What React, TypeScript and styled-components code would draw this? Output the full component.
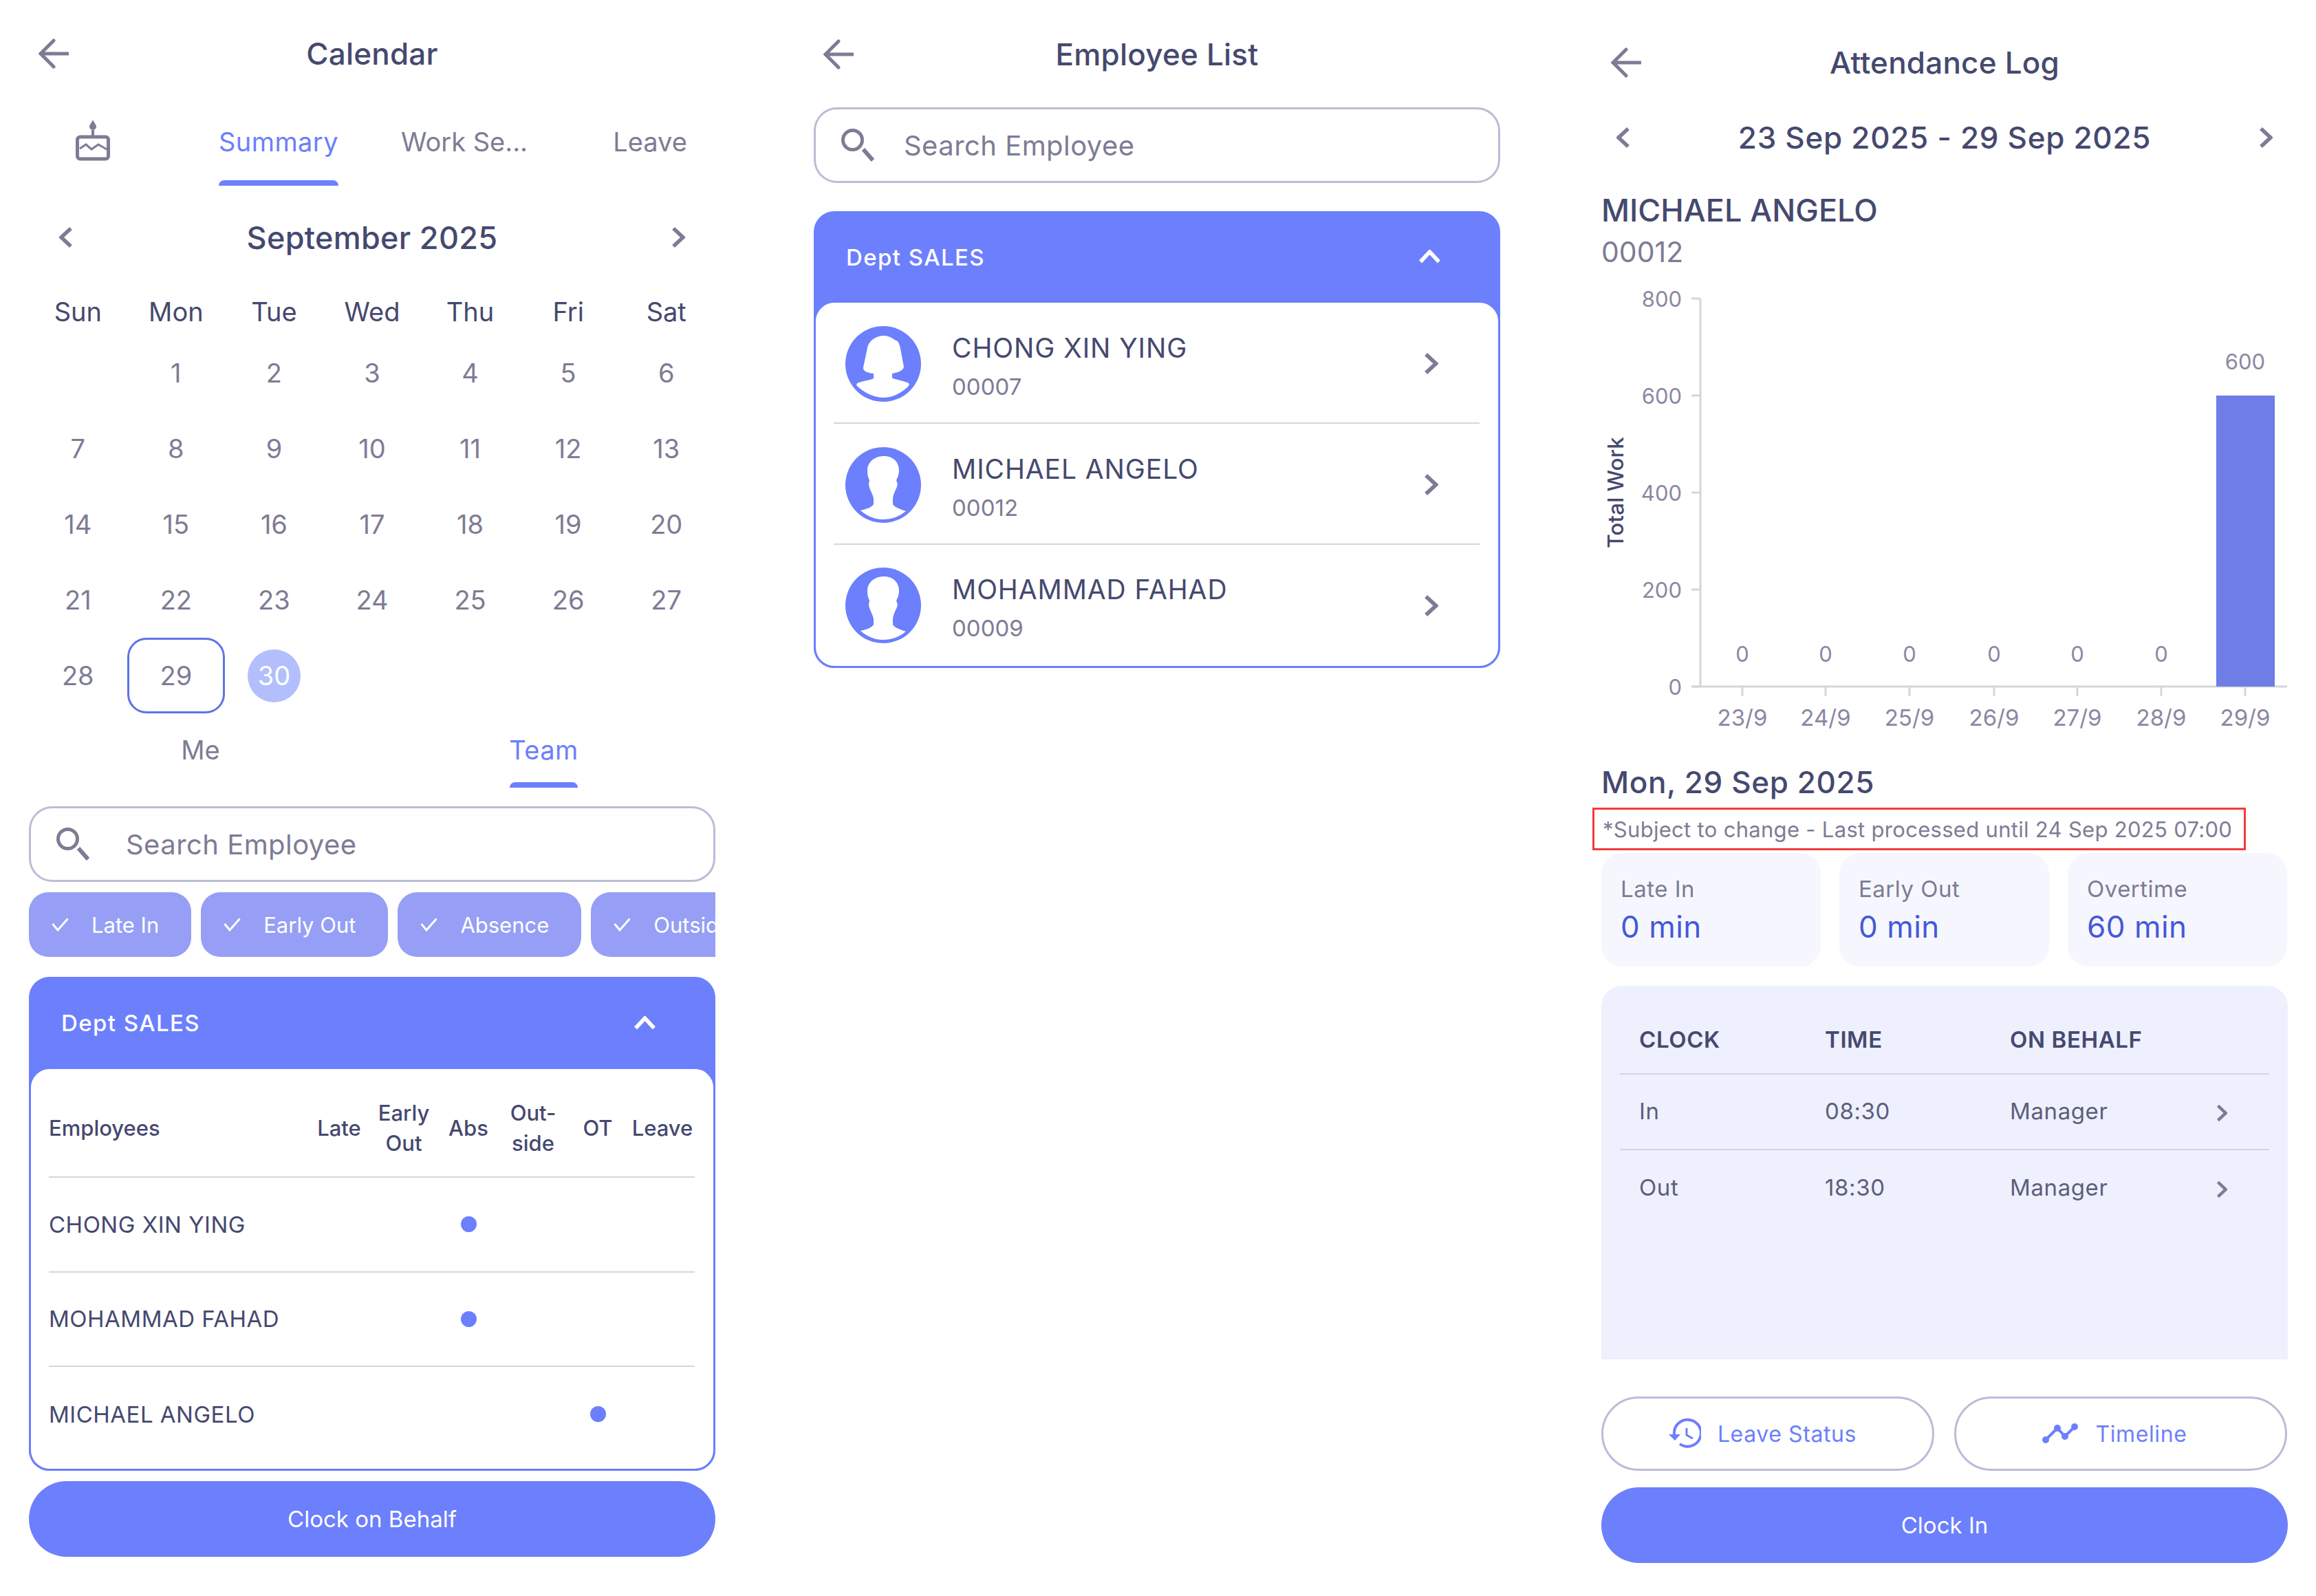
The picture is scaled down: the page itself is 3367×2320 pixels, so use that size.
import React from 'react';
import styled, { createGlobalStyle } from 'styled-components';

const ACCENT = '#6c7ffc';
const INK = '#45496f';
const MUTED = '#7d7c95';
const RULE = '#d6d6da';
const OUTLINE = '#b9bdd6';

const GlobalStyle = createGlobalStyle`
  html, body {
    margin: 0;
    padding: 0;
    background: #fff;
  }
  body {
    font-family: Inter, "Noto Sans", sans-serif;
    color: ${INK};
  }
  * {
    box-sizing: border-box;
  }
`;

const Page = styled.div`
  width: 3367px;
  height: 2320px;
  display: grid;
  grid-template-columns: 1141px 1145px 1081px;
  overflow: hidden;
`;

const Screen = styled.section<{ $top: number }>`
  padding: ${(p) => p.$top}px 0 0 42px;
  width: 1040px;
`;

const Header = styled.header`
  display: grid;
  grid-template-columns: 100px 1fr 100px;
  align-items: center;
  height: 44px;

  > svg {
    margin-left: 14px;
  }
`;

const Title = styled.h1`
  margin: 0;
  text-align: center;
  font-size: 44px;
  line-height: 44px;
  font-weight: 500;
  letter-spacing: 0.2px;
`;

const TabRow = styled.div`
  display: grid;
  grid-template-columns: 228px 270px 270px 270px;
  align-items: start;
  height: 98px;
  margin-top: 72px;
`;

const CakeWrap = styled.div`
  padding-left: 68px;
`;

const Tab = styled.div<{ $active?: boolean; $gap: number }>`
  display: flex;
  flex-direction: column;
  align-items: center;
  font-size: 38px;
  line-height: 68px;
  letter-spacing: ${(p) => (p.$active ? 0.4 : 0)}px;
  color: ${(p) => (p.$active ? ACCENT : MUTED)};

  &::after {
    content: '';
    display: ${(p) => (p.$active ? 'block' : 'none')};
    align-self: center;
    width: var(--bar-width);
    height: 8px;
    margin-top: ${(p) => p.$gap}px;
    border-radius: 8px 8px 0 0;
    background: ${ACCENT};
  }
`;

const MonthBar = styled.div`
  display: flex;
  align-items: center;
  justify-content: space-between;
  height: 50px;
  margin-top: 50px;
  padding: 0 44px;
`;

const MonthLabel = styled.div`
  font-size: 45px;
  font-weight: 500;
  letter-spacing: 0.3px;
`;

const WeekRow = styled.div`
  display: grid;
  grid-template-columns: repeat(7, 1fr);
  height: 68px;
  margin-top: 49px;
  align-items: center;
  text-align: center;
  font-size: 38px;
`;

const DayGrid = styled.div`
  display: grid;
  grid-template-columns: repeat(7, 1fr);
  grid-auto-rows: 110px;
`;

const Day = styled.div<{ $kind?: 'today' | 'selected' }>`
  display: flex;
  align-items: center;
  justify-content: center;
  font-size: 38px;
  color: ${MUTED};
  ${(p) =>
    p.$kind === 'today' &&
    `border: 3px solid #5f73e8; border-radius: 28px;`}
`;

const SelectedDot = styled.div`
  display: flex;
  align-items: center;
  justify-content: center;
  width: 77px;
  height: 77px;
  border-radius: 50%;
  background: #b3bffd;
  color: #fff;
`;

const ScopeTabs = styled.div`
  display: grid;
  grid-template-columns: 1fr 1fr;
  padding-top: 19px;
  height: 108px;
`;

const SearchBox = styled.div<{ $top: number; $left: number }>`
  display: flex;
  align-items: center;
  height: 110px;
  margin-top: ${(p) => p.$top}px;
  padding-left: 35px;
  border: 3px solid ${OUTLINE};
  border-radius: 34px;
  font-size: 40px;
  color: ${MUTED};

  > span {
    margin-left: ${(p) => p.$left}px;
    letter-spacing: 0.45px;
  }
`;

const ChipRow = styled.div`
  display: flex;
  gap: 14px;
  height: 94px;
  margin-top: 15px;
  overflow: hidden;
`;

const Chip = styled.div`
  flex: none;
  display: flex;
  align-items: center;
  gap: 33px;
  padding: 0 47px 0 33px;
  border-radius: 28px;
  background: #969ff5;
  color: #fff;
  font-size: 31px;
`;

const DeptCard = styled.div<{ $top: number }>`
  margin-top: ${(p) => p.$top}px;
  border-radius: 30px;
  background: ${ACCENT};
`;

const DeptHead = styled.div<{ $height: number }>`
  display: flex;
  align-items: center;
  justify-content: space-between;
  height: ${(p) => p.$height}px;
  padding: 3px 86px 0 47px;
  color: #fff;
  font-size: 33px;
  font-weight: 500;
  letter-spacing: 1.4px;
`;

const DeptBody = styled.div<{ $height: number }>`
  height: ${(p) => p.$height}px;
  border: 3px solid ${ACCENT};
  border-radius: 30px;
  background: #fff;
`;

const MatrixRow = styled.div<{ $head?: boolean; $last?: boolean }>`
  display: grid;
  grid-template-columns: 375px repeat(6, 94px);
  align-items: center;
  margin: 0 0 0 26px;
  width: 939px;
  height: ${(p) => (p.$head ? 158 : 137.5)}px;
  padding-top: ${(p) => (p.$head ? 16 : 0)}px;
  border-bottom: ${(p) => (p.$last ? 'none' : `2px solid ${RULE}`)};
  font-size: ${(p) => (p.$head ? 31 : 33)}px;
  font-weight: ${(p) => (p.$head ? 500 : 400)};
  letter-spacing: ${(p) => (p.$head ? 0 : 0.5)}px;
  line-height: 44px;
`;

const MatrixCell = styled.div`
  display: flex;
  justify-content: center;
  text-align: center;
`;

const Dot = styled.div`
  width: 23px;
  height: 23px;
  border-radius: 50%;
  background: ${ACCENT};
`;

const PrimaryButton = styled.div<{ $top: number }>`
  display: flex;
  align-items: center;
  justify-content: center;
  height: 110px;
  margin-top: ${(p) => p.$top}px;
  border-radius: 55px;
  background: ${ACCENT};
  color: #fff;
  font-size: 33px;
`;

const EmployeeRow = styled.div<{ $last?: boolean }>`
  display: flex;
  align-items: center;
  height: ${(p) => (p.$last ? 173 : 176)}px;
  margin: 0 27px 0 26px;
  padding: 3px 60px 0 17px;
  border-bottom: ${(p) => (p.$last ? 'none' : `2px solid ${RULE}`)};
`;

const EmployeeText = styled.div`
  margin-left: 45px;
  padding-top: 10px;
  flex: 1;
`;

const EmployeeName = styled.div`
  font-size: 39px;
  line-height: 50px;
  letter-spacing: 0.9px;
`;

const EmployeeCode = styled.div`
  margin-top: 6px;
  font-size: 33px;
  line-height: 50px;
  color: ${MUTED};
`;

const RangeBar = styled.div`
  display: flex;
  align-items: center;
  justify-content: space-between;
  height: 50px;
  margin-top: 62px;
  padding: 0 22px;
  font-size: 44px;
  font-weight: 500;
  letter-spacing: 0.7px;
`;

const PersonName = styled.div`
  margin-top: 54px;
  font-size: 45px;
  font-weight: 500;
  line-height: 54px;
`;

const PersonCode = styled.div`
  margin-top: 8px;
  font-size: 41px;
  line-height: 50px;
  color: ${MUTED};
`;

const ChartSvg = styled.svg`
  display: block;
  margin-top: 29px;
`;

const AxisText = styled.text<{ $size: number }>`
  font-family: Inter, sans-serif;
  font-size: ${(p) => p.$size}px;
  fill: #8a88a3;
`;

const AxisTitle = styled.text`
  font-family: Inter, sans-serif;
  font-size: 31.5px;
  font-weight: 500;
  fill: ${INK};
`;

const DateTitle = styled.div`
  margin-top: 42px;
  font-size: 44px;
  font-weight: 500;
  line-height: 50px;
  letter-spacing: 0.6px;
`;

const Note = styled.div`
  display: flex;
  align-items: center;
  width: 950px;
  height: 62px;
  margin: 12px 0 0 -13px;
  padding-left: 12px;
  border: 3px solid #f33b3b;
  font-size: 31px;
  letter-spacing: 0.3px;
  white-space: nowrap;
  color: ${MUTED};
`;

const StatRow = styled.div`
  display: grid;
  grid-template-columns: 319px 305px 319px;
  column-gap: 27px;
  margin-top: 4px;
`;

const StatCard = styled.div`
  height: 165px;
  padding: 30px 0 0 28px;
  border-radius: 30px;
  background: #f6f7fe;
`;

const StatLabel = styled.div`
  font-size: 33px;
  line-height: 44px;
  letter-spacing: 0.5px;
  color: ${MUTED};
`;

const StatValue = styled.div`
  margin-top: 5px;
  font-size: 44px;
  line-height: 56px;
  letter-spacing: 0.5px;
  color: #4459d8;
`;

const LogPanel = styled.div`
  height: 543px;
  margin-top: 28px;
  padding: 0 27px;
  border-radius: 30px 30px 0 0;
  background: #eef0fd;
`;

const LogRow = styled.div<{ $head?: boolean }>`
  display: grid;
  grid-template-columns: 270px 269px 300px 1fr;
  align-items: center;
  height: ${(p) => (p.$head ? 129 : 110)}px;
  padding: ${(p) => (p.$head ? '29px 0 0 28px' : '0 0 3px 28px')};
  border-bottom: 2px solid #d3d5e6;
  font-size: 33px;
  font-weight: ${(p) => (p.$head ? 600 : 400)};
  letter-spacing: 0.6px;
  color: ${(p) => (p.$head ? INK : '#5c5e7c')};

  &:last-child {
    border-bottom: none;
  }
`;

const LogChevron = styled.div`
  display: flex;
  padding-top: 6px;
`;

const ActionRow = styled.div`
  display: grid;
  grid-template-columns: 484px 484px;
  column-gap: 29px;
  margin-top: 54px;
`;

const OutlineButton = styled.div`
  display: flex;
  align-items: center;
  justify-content: center;
  gap: 24px;
  height: 108px;
  padding-right: 18px;
  border: 3px solid ${OUTLINE};
  border-radius: 54px;
  color: ${ACCENT};
  font-size: 32px;
  letter-spacing: 0.6px;
`;

type Dir = 'left' | 'right' | 'up';

const CHEVRON: Record<Dir, string> = {
  left: 'M17 3 L3 16 L17 29',
  right: 'M3 3 L17 16 L3 29',
  up: 'M3 17 L16 3 L29 17',
};

function Chevron({ dir, size, color = MUTED }: { dir: Dir; size: number; color?: string }) {
  const box = dir === 'up' ? '0 0 32 20' : '0 0 20 32';
  const w = dir === 'up' ? size : (size * 20) / 32;
  const h = dir === 'up' ? (size * 20) / 32 : size;
  return (
    <svg width={w} height={h} viewBox={box} fill="none" stroke={color} strokeWidth={5.5}>
      <path d={CHEVRON[dir]} />
    </svg>
  );
}

function BackArrow() {
  return (
    <svg width="44" height="44" viewBox="0 0 44 44" fill="none" stroke={MUTED} strokeWidth={5} strokeLinecap="round">
      <path d="M3 22 H43 M22 3 L3 22 L22 41" />
    </svg>
  );
}

function CakeIcon() {
  return (
    <svg width="50" height="62" viewBox="20 10 50 62" fill="none" stroke={MUTED}>
      <path d="M45 12 C47 17 50 19 50 22 A5 5 0 0 1 40 22 C40 19 43 17 45 12 Z" fill={MUTED} stroke="none" />
      <path d="M45 27 V36" strokeWidth={4} />
      <rect x="22.5" y="37" width="45" height="32" rx="4" strokeWidth={5} />
      <path d="M26 54 L35 48 L43 55 L53 48 L65 55" strokeWidth={3} />
    </svg>
  );
}

function SearchIcon() {
  return (
    <svg width="52" height="52" viewBox="20 10 52 52" fill="none" stroke={MUTED} strokeWidth={5}>
      <circle cx="38.5" cy="28.5" r="14" />
      <path d="M54 42 L68 58" strokeWidth={6} />
    </svg>
  );
}

function CheckIcon() {
  return (
    <svg width="25" height="20" viewBox="0 0 25 20" fill="none" stroke="#fff" strokeWidth={3}>
      <path d="M1.5 9 L9 18 L23.5 1.5" />
    </svg>
  );
}

function FemaleAvatar() {
  return (
    <svg width="110" height="110" viewBox="0 0 110 110">
      <circle cx="55" cy="55" r="55" fill={ACCENT} />
      <path
        fill="#fff"
        d="M56 14 C66 14 70 20 76 22 C79 26 80 32 81 38 L85 59 C85 65 74 68 68 69 L68 75 C68 77 84 79 92 83 C94 85 92 87 90 89 C80 98 68 104 55 104 C42 104 28 97 18 88 C15 85 16 83 20 82 C28 79 42 78 41 75 L41 69 C34 68 25 66 26 60 L32 32 C33 24 42 14 56 14 Z"
      />
    </svg>
  );
}

function MaleAvatar() {
  return (
    <svg width="110" height="110" viewBox="0 0 110 110">
      <circle cx="55" cy="55" r="55" fill={ACCENT} />
      <path
        fill="#fff"
        d="M56 13 C70 13 78 22 78 34 C78 40 76 44 74 48 L76 54 C74 62 69 68 69 76 L69 83 C72 88 80 90 88 93 C78 101 68 105 55 105 C42 105 31 100 22 92 C30 90 38 88 41 83 L41 75 C40 68 35 62 34 54 L35 48 C33 44 32 40 32 34 C32 22 42 13 56 13 Z"
      />
    </svg>
  );
}

function HistoryIcon() {
  return (
    <svg width="50" height="50" viewBox="10 8 50 50" fill="none" stroke={ACCENT} strokeWidth={4}>
      <path d="M21 34 A19.5 19.5 0 1 1 29 48" />
      <path d="M13 34 H30 L22 43 Z" fill={ACCENT} stroke="none" />
      <path d="M39 25 V35 L48 40" strokeWidth={3} />
    </svg>
  );
}

function TrendIcon() {
  return (
    <svg width="54" height="30" viewBox="9 19 54 30" fill={ACCENT} stroke={ACCENT} strokeWidth={4}>
      <path d="M14 43 L31 26 L42 38 L56 24" fill="none" />
      <circle cx="14" cy="43" r="3" />
      <circle cx="31" cy="26" r="3" />
      <circle cx="42" cy="38" r="3" />
      <circle cx="56" cy="24" r="3" />
    </svg>
  );
}

const WEEKDAYS = ['Sun', 'Mon', 'Tue', 'Wed', 'Thu', 'Fri', 'Sat'];
const FILTERS = ['Late In', 'Early Out', 'Absence', 'Outside'];
const TEAM: { name: string; mark: number }[] = [
  { name: 'CHONG XIN YING', mark: 2 },
  { name: 'MOHAMMAD FAHAD', mark: 2 },
  { name: 'MICHAEL ANGELO', mark: 4 },
];
const STAFF = [
  { name: 'CHONG XIN YING', code: '00007', female: true },
  { name: 'MICHAEL ANGELO', code: '00012', female: false },
  { name: 'MOHAMMAD FAHAD', code: '00009', female: false },
];
const BARS = [
  { day: '23/9', x: 205, value: 0 },
  { day: '24/9', x: 326, value: 0 },
  { day: '25/9', x: 448, value: 0 },
  { day: '26/9', x: 571, value: 0 },
  { day: '27/9', x: 692, value: 0 },
  { day: '28/9', x: 814, value: 0 },
  { day: '29/9', x: 936, value: 600 },
];

function CalendarScreen() {
  const days: (number | null)[] = [null];
  for (let d = 1; d <= 30; d++) days.push(d);

  return (
    <Screen $top={56}>
      <Header>
        <BackArrow />
        <Title>Calendar</Title>
      </Header>
      <TabRow>
        <CakeWrap>
          <CakeIcon />
        </CakeWrap>
        <Tab $active $gap={22} style={{ '--bar-width': '174px' } as React.CSSProperties}>
          Summary
        </Tab>
        <Tab $gap={22}>Work Se...</Tab>
        <Tab $gap={22}>Leave</Tab>
      </TabRow>
      <MonthBar>
        <Chevron dir="left" size={32} />
        <MonthLabel>September 2025</MonthLabel>
        <Chevron dir="right" size={32} />
      </MonthBar>
      <WeekRow>
        {WEEKDAYS.map((d) => (
          <div key={d}>{d}</div>
        ))}
      </WeekRow>
      <DayGrid>
        {days.map((d, i) => {
          if (d === 30) {
            return (
              <Day key={i}>
                <SelectedDot>30</SelectedDot>
              </Day>
            );
          }
          return (
            <Day key={i} $kind={d === 29 ? 'today' : undefined}>
              {d}
            </Day>
          );
        })}
      </DayGrid>
      <ScopeTabs>
        <Tab $gap={13}>Me</Tab>
        <Tab $active $gap={13} style={{ '--bar-width': '99px' } as React.CSSProperties}>
          Team
        </Tab>
      </ScopeTabs>
      <SearchBox $top={27} $left={51}>
        <SearchIcon />
        <span>Search Employee</span>
      </SearchBox>
      <ChipRow>
        {FILTERS.map((f) => (
          <Chip key={f}>
            <CheckIcon />
            {f}
          </Chip>
        ))}
      </ChipRow>
      <DeptCard $top={29}>
        <DeptHead $height={131}>
          Dept SALES
          <Chevron dir="up" size={33} color="#fff" />
        </DeptHead>
        <DeptBody $height={587}>
          <MatrixRow $head>
            <div>Employees</div>
            <MatrixCell>Late</MatrixCell>
            <MatrixCell>
              Early
              <br />
              Out
            </MatrixCell>
            <MatrixCell>Abs</MatrixCell>
            <MatrixCell>
              Out-
              <br />
              side
            </MatrixCell>
            <MatrixCell>OT</MatrixCell>
            <MatrixCell>Leave</MatrixCell>
          </MatrixRow>
          {TEAM.map((t, i) => (
            <MatrixRow key={t.name} $last={i === TEAM.length - 1}>
              <div>{t.name}</div>
              {[0, 1, 2, 3, 4, 5].map((c) => (
                <MatrixCell key={c}>{c === t.mark && <Dot />}</MatrixCell>
              ))}
            </MatrixRow>
          ))}
        </DeptBody>
      </DeptCard>
      <PrimaryButton $top={15}>Clock on Behalf</PrimaryButton>
    </Screen>
  );
}

function EmployeeScreen() {
  return (
    <Screen $top={57}>
      <Header>
        <BackArrow />
        <Title>Employee List</Title>
      </Header>
      <SearchBox $top={55} $left={41}>
        <SearchIcon />
        <span>Search Employee</span>
      </SearchBox>
      <DeptCard $top={41}>
        <DeptHead $height={130}>
          Dept SALES
          <Chevron dir="up" size={33} color="#fff" />
        </DeptHead>
        <DeptBody $height={534}>
          {STAFF.map((s, i) => (
            <EmployeeRow key={s.code} $last={i === STAFF.length - 1}>
              {s.female ? <FemaleAvatar /> : <MaleAvatar />}
              <EmployeeText>
                <EmployeeName>{s.name}</EmployeeName>
                <EmployeeCode>{s.code}</EmployeeCode>
              </EmployeeText>
              <Chevron dir="right" size={33} />
            </EmployeeRow>
          ))}
        </DeptBody>
      </DeptCard>
    </Screen>
  );
}

function WorkChart() {
  const base = 578;
  const top = 14;
  const scale = (base - top) / 800;
  return (
    <ChartSvg width="998" height="650" viewBox="0 0 998 650">
      <path d={`M144 ${top} V${base} M131 ${base} H997`} stroke={RULE} strokeWidth={3} fill="none" />
      {[0, 200, 400, 600, 800].map((v) => {
        const y = base - v * scale;
        return (
          <g key={v}>
            <path d={`M131 ${y} H144`} stroke={RULE} strokeWidth={3} />
            <AxisText $size={31} x={117} y={y + 12} textAnchor="end">
              {v}
            </AxisText>
          </g>
        );
      })}
      <AxisTitle transform="translate(32 296) rotate(-90)" textAnchor="middle">
        Total Work
      </AxisTitle>
      {BARS.map((b) => {
        const y = base - b.value * scale;
        return (
          <g key={b.day}>
            {b.value > 0 && <rect x={b.x - 42} y={y} width={85} height={base - y} fill="#6f7de6" />}
            <path d={`M${b.x} ${base} V${base + 14}`} stroke={RULE} strokeWidth={3} />
            <AxisText $size={31} x={b.x} y={b.value > 0 ? y - 38 : base - 36} textAnchor="middle">
              {b.value}
            </AxisText>
            <AxisText $size={33} x={b.x} y={base + 57} textAnchor="middle">
              {b.day}
            </AxisText>
          </g>
        );
      })}
    </ChartSvg>
  );
}

function AttendanceScreen() {
  return (
    <Screen $top={69}>
      <Header>
        <BackArrow />
        <Title>Attendance Log</Title>
      </Header>
      <RangeBar>
        <Chevron dir="left" size={32} />
        23 Sep 2025 - 29 Sep 2025
        <Chevron dir="right" size={32} />
      </RangeBar>
      <PersonName>MICHAEL ANGELO</PersonName>
      <PersonCode>00012</PersonCode>
      <WorkChart />
      <DateTitle>Mon, 29 Sep 2025</DateTitle>
      <Note>*Subject to change - Last processed until 24 Sep 2025 07:00</Note>
      <StatRow>
        <StatCard>
          <StatLabel>Late In</StatLabel>
          <StatValue>0 min</StatValue>
        </StatCard>
        <StatCard>
          <StatLabel>Early Out</StatLabel>
          <StatValue>0 min</StatValue>
        </StatCard>
        <StatCard>
          <StatLabel>Overtime</StatLabel>
          <StatValue>60 min</StatValue>
        </StatCard>
      </StatRow>
      <LogPanel>
        <LogRow $head>
          <div>CLOCK</div>
          <div>TIME</div>
          <div>ON BEHALF</div>
        </LogRow>
        <LogRow>
          <div>In</div>
          <div>08:30</div>
          <div>Manager</div>
          <LogChevron>
            <Chevron dir="right" size={26} />
          </LogChevron>
        </LogRow>
        <LogRow>
          <div>Out</div>
          <div>18:30</div>
          <div>Manager</div>
          <LogChevron>
            <Chevron dir="right" size={26} />
          </LogChevron>
        </LogRow>
      </LogPanel>
      <ActionRow>
        <OutlineButton>
          <HistoryIcon />
          Leave Status
        </OutlineButton>
        <OutlineButton>
          <TrendIcon />
          Timeline
        </OutlineButton>
      </ActionRow>
      <PrimaryButton $top={24}>Clock In</PrimaryButton>
    </Screen>
  );
}

export default function App() {
  return (
    <>
      <GlobalStyle />
      <Page>
        <CalendarScreen />
        <EmployeeScreen />
        <AttendanceScreen />
      </Page>
    </>
  );
}
